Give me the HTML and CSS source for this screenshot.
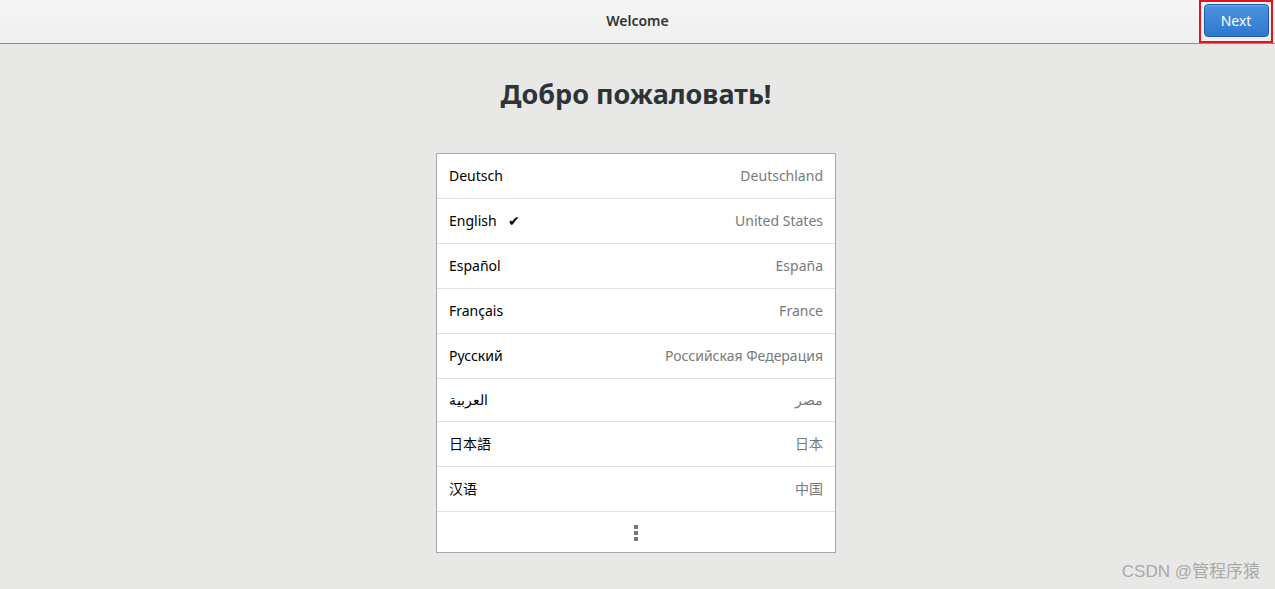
FILE: index.html
```html
<!DOCTYPE html>
<html lang="ru">

<head>
    <meta charset="UTF-8">
    <meta name="viewport" content="width=device-width, initial-scale=1.0">
    <title>Welcome</title>
    <link rel="stylesheet" href="styles.css">
</head>

<body>
    <div class="header">
        <span class="title">Welcome</span>
        <div class="next-wrap">
            <button class="next">Next</button>
        </div>
    </div>

    <div class="main">
        <h1>Добро пожаловать!</h1>
        <ul class="langs">
            <li><span>Deutsch</span><span class="region">Deutschland</span></li>
            <li><span>English <span class="check">&#10004;</span></span><span class="region">United States</span></li>
            <li><span>Español</span><span class="region">España</span></li>
            <li><span>Français</span><span class="region">France</span></li>
            <li><span>Русский</span><span class="region">Российская Федерация</span></li>
            <li class="short"><span>العربية</span><span class="region">مصر</span></li>
            <li><span>日本語</span><span class="region">日本</span></li>
            <li><span>汉语</span><span class="region">中国</span></li>
            <li class="more">
                <!-- 三个小点 -->
                <span class="dots"><i></i><i></i><i></i></span>
            </li>
        </ul>
    </div>

    <div class="mark">CSDN @管程序猿</div>
</body>

</html>
```

FILE: styles.css
```css
* {
    margin: 0;
    padding: 0;
    box-sizing: border-box;
}

ul {
    list-style: none;
}

body {
    width: 1275px;
    height: 589px;
    overflow: hidden;
    background-color: #e8e8e7;
    font-family: "Noto Sans", "Noto Sans CJK SC", sans-serif;
    color: #2e3436;
    position: relative;
}

.header {
    height: 44px;
    background: linear-gradient(#f5f5f5, #efefee);
    border-bottom: 1px solid #8f8f8f;
    display: flex;
    align-items: center;
    justify-content: center;
    padding-bottom: 2px;
    position: relative;
}

.title {
    font-size: 14px;
    font-weight: 600;
    color: #2e3436;
}

.next-wrap {
    position: absolute;
    top: 0;
    right: 2px;
    width: 74px;
    height: 43px;
    border: 2px solid #e0141e;
    display: flex;
    align-items: center;
    justify-content: center;
    padding-bottom: 3px;
}

.next {
    width: 65px;
    height: 33px;
    border: 1px solid #1f5aa5;
    border-radius: 4px;
    background: linear-gradient(#4c94e0, #2f78cd);
    color: #fff;
    font-family: "Noto Sans", sans-serif;
    font-size: 14px;
    box-shadow: inset 0 1px 0 rgba(255, 255, 255, 0.2);
}

.main {
    display: flex;
    flex-direction: column;
    align-items: center;
    padding-top: 30px;
    padding-right: 3px;
}

h1 {
    font-size: 27px;
    font-weight: bold;
    line-height: 40px;
    color: #2e3436;
    margin-bottom: 39px;
}

.langs {
    width: 400px;
    background: #fff;
    border: 1px solid #a8a8a8;
}

.langs li {
    height: 45px;
    padding: 0 12px 2px;
    display: flex;
    align-items: center;
    justify-content: space-between;
    font-size: 14px;
    color: #000;
    border-bottom: 1px solid #e1e1e1;
}

.langs li.short {
    height: 43px;
}

.region {
    color: #777a7a;
}

.check {
    font-size: 14px;
    margin-left: 8px;
}

.langs li.more {
    height: 40px;
    padding-bottom: 0;
    border-bottom: none;
    justify-content: center;
}

.dots {
    display: flex;
    flex-direction: column;
    gap: 2px;
    padding-top: 2px;
}

.dots i {
    width: 4px;
    height: 4px;
    background-color: #777;
}

.mark {
    position: absolute;
    right: 15px;
    bottom: 7px;
    font-family: "Liberation Sans", "Noto Sans CJK SC", sans-serif;
    font-size: 17px;
    color: #a9a9a9;
}
```
